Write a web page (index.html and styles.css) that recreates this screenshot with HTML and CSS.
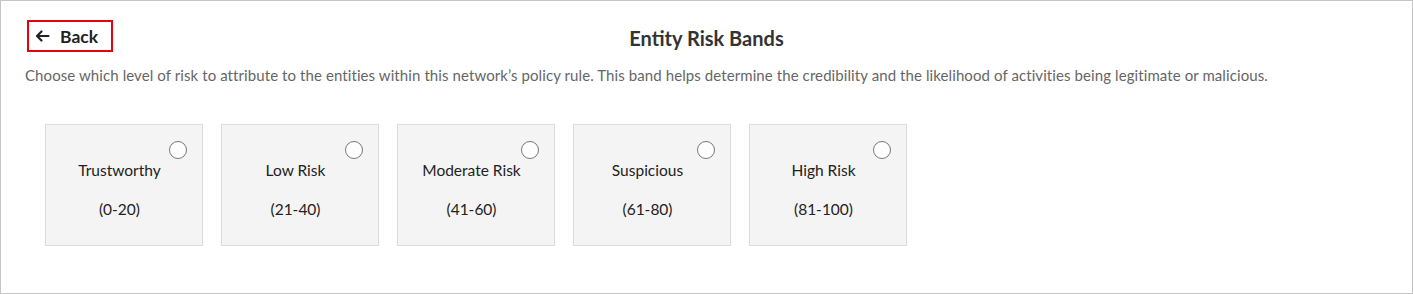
FILE: index.html
```html
<!DOCTYPE html>
<html lang="en">
<head>
  <meta charset="UTF-8" />
  <meta name="viewport" content="width=device-width, initial-scale=1.0" />
  <title>Entity Risk Bands</title>
  <link rel="stylesheet" href="styles.css">
</head>
<body>

<div class="panel">
  <div class="header">
    <button class="back">
      <svg class="back-icon" width="15" height="14" viewBox="0 0 15 14">
        <path d="M13.5 7H2M6.5 2.5L2 7l4.5 4.5" fill="none" stroke="#222" stroke-width="2.2" stroke-linecap="round" stroke-linejoin="round"/>
      </svg>
      Back
    </button>
    <h1 class="title">Entity Risk Bands</h1>
  </div>

  <p class="intro">Choose which level of risk to attribute to the entities within this network’s policy rule. This band helps determine the credibility and the likelihood of activities being legitimate or malicious.</p>

  <div class="bands">
    <label class="band">
      <input type="radio" name="band" class="band-radio" />
      <span class="band-name">Trustworthy</span>
      <span class="band-range">(0-20)</span>
    </label>
    <label class="band">
      <input type="radio" name="band" class="band-radio" />
      <span class="band-name">Low Risk</span>
      <span class="band-range">(21-40)</span>
    </label>
    <label class="band">
      <input type="radio" name="band" class="band-radio" />
      <span class="band-name">Moderate Risk</span>
      <span class="band-range">(41-60)</span>
    </label>
    <label class="band">
      <input type="radio" name="band" class="band-radio" />
      <span class="band-name">Suspicious</span>
      <span class="band-range">(61-80)</span>
    </label>
    <label class="band">
      <input type="radio" name="band" class="band-radio" />
      <span class="band-name">High Risk</span>
      <span class="band-range">(81-100)</span>
    </label>
  </div>
</div>

</body>
</html>
```

FILE: styles.css
```css
* {
  box-sizing: border-box;
}

body {
  margin: 0;
  font-family: Lato, 'Open Sans', sans-serif;
  background: #fff;
}

.panel {
  width: 1413px;
  height: 294px;
  border: 1px solid #c4c4c4;
  padding: 19px 24px 0 24px;
}

.header {
  position: relative;
  height: 32px;
}

.back {
  display: flex;
  align-items: center;
  gap: 10px;
  height: 32px;
  padding: 0 13px 0 6px;
  margin-left: 2px;
  border: 2px solid #e8000b;
  background: #fff;
  font-family: inherit;
  font-size: 17.5px;
  font-weight: bold;
  color: #222;
  cursor: pointer;
}

.title {
  position: absolute;
  left: 0;
  right: 0;
  top: 6px;
  margin: 0;
  text-align: center;
  font-size: 20px;
  font-weight: bold;
  color: #333;
  pointer-events: none;
}

.intro {
  margin: 14px 0 0 0;
  font-size: 15px;
  letter-spacing: 0.09px;
  color: #666;
}

.bands {
  display: flex;
  gap: 18px;
  margin: 40px 0 0 20px;
}

.band {
  position: relative;
  width: 158px;
  height: 122px;
  background: #f4f4f4;
  border: 1px solid #dcdcdc;
  display: flex;
  flex-direction: column;
  align-items: center;
  padding: 36px 9px 0 0;
  font-size: 15.5px;
  color: #222;
  cursor: pointer;
}

.band-radio {
  position: absolute;
  top: 16px;
  right: 15px;
  margin: 0;
  width: 18px;
  height: 18px;
  appearance: none;
  border: 1px solid #777;
  border-radius: 50%;
  background: #fff;
}

.band-radio:checked {
  background: radial-gradient(circle, #333 40%, #fff 45%);
}

.band-range {
  margin-top: 21px;
}
```
